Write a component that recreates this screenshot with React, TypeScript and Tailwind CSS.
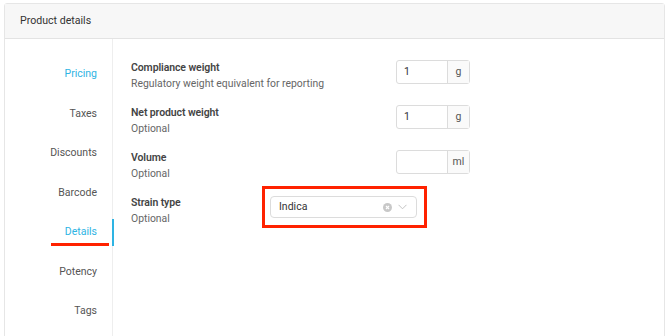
import React from "react";

const navItems = ["Pricing", "Taxes", "Discounts", "Barcode", "Details", "Potency", "Tags"];

function UnitInput({ value, unit }: { value: string; unit: string }) {
  return (
    <div className="flex h-[24px] w-[74px] rounded-[3px] border border-[#dcdcdc] bg-white text-[10.5px] text-[#333]">
      <div className="flex w-[50px] items-center pl-[7px]">{value}</div>
      <div className="flex flex-1 items-center justify-center border-l border-[#dcdcdc] bg-[#fafafa] text-[#555]">{unit}</div>
    </div>
  );
}

function Label({ title, sub }: { title: string; sub: string }) {
  return (
    <div className="leading-[16px]">
      <div className="text-[10.5px] font-[600] tracking-[-0.1px] text-[#444]">{title}</div>
      <div className="text-[10.4px] text-[#666]">{sub}</div>
    </div>
  );
}

export default function App() {
  return (
    <div className="h-[336px] w-[670px] overflow-hidden bg-white" style={{ fontFamily: "Roboto, 'Liberation Sans', sans-serif" }}>
      <div className="ml-[4px] mt-[3px] w-[661px] rounded-t-[3px] border border-[#e6e6e6]">
        <div className="flex h-[35px] items-center border-b border-[#e3e3e3] bg-[#f7f7f7] pl-[15px] text-[10.6px] text-[#333]">
          Product details
        </div>
        <div className="flex h-[300px]">
          <div className="w-[108px] border-r border-[#eeeeee] pt-[15.5px]">
            {navItems.map((item) => {
              const active = item === "Details";
              const blue = item === "Pricing" || active;
              return (
                <div
                  key={item}
                  className={`relative flex h-[39.5px] items-center justify-end pr-[15px] text-[10.5px] ${blue ? "text-[#2eb4e3]" : "text-[#555]"}`}
                >
                  {item}
                  {active && (
                    <>
                      <span className="absolute right-[-2px] top-[6px] h-[27px] w-[2px] bg-[#2eb4e3]" />
                      <span className="absolute left-[46px] top-[30px] h-[3px] w-[58px] bg-[#ff2200]" />
                    </>
                  )}
                </div>
              );
            })}
          </div>
          <div className="flex flex-1 flex-col gap-[13px] pl-[18px] pt-[20.5px]">
            <div className="flex items-start">
              <div className="w-[265px]"><Label title="Compliance weight" sub="Regulatory weight equivalent for reporting" /></div>
              <div className="mt-[0.5px]"><UnitInput value="1" unit="g" /></div>
            </div>
            <div className="flex items-start">
              <div className="w-[265px]"><Label title="Net product weight" sub="Optional" /></div>
              <div className="mt-[0.5px]"><UnitInput value="1" unit="g" /></div>
            </div>
            <div className="flex items-start">
              <div className="w-[265px]"><Label title="Volume" sub="Optional" /></div>
              <div className="mt-[0.5px]"><UnitInput value="" unit="ml" /></div>
            </div>
            <div className="flex items-start">
              <div className="w-[131px]"><Label title="Strain type" sub="Optional" /></div>
              <div className="-mt-[8.5px] border-[3px] border-[#ff2200] pb-[7px] pl-[5px] pr-[7px] pt-[7px]">
                <div className="flex h-[22px] w-[147px] items-center rounded-[4px] border border-[#dcdcdc] bg-white pl-[8px] pr-[9px] text-[10.5px] text-[#333]">
                  <span className="flex-1">Indica</span>
                  <svg width="9" height="9" viewBox="0 0 10 10" className="mr-[6px]">
                    <circle cx="5" cy="5" r="5" fill="#c8c8c8" />
                    <path d="M3.3 3.3 L6.7 6.7 M6.7 3.3 L3.3 6.7" stroke="#fff" strokeWidth="1.3" />
                  </svg>
                  <svg width="9" height="6" viewBox="0 0 9 6">
                    <path d="M0.5 0.8 L4.5 4.8 L8.5 0.8" stroke="#c4c4c4" strokeWidth="1" fill="none" />
                  </svg>
                </div>
              </div>
            </div>
          </div>
        </div>
      </div>
    </div>
  );
}
